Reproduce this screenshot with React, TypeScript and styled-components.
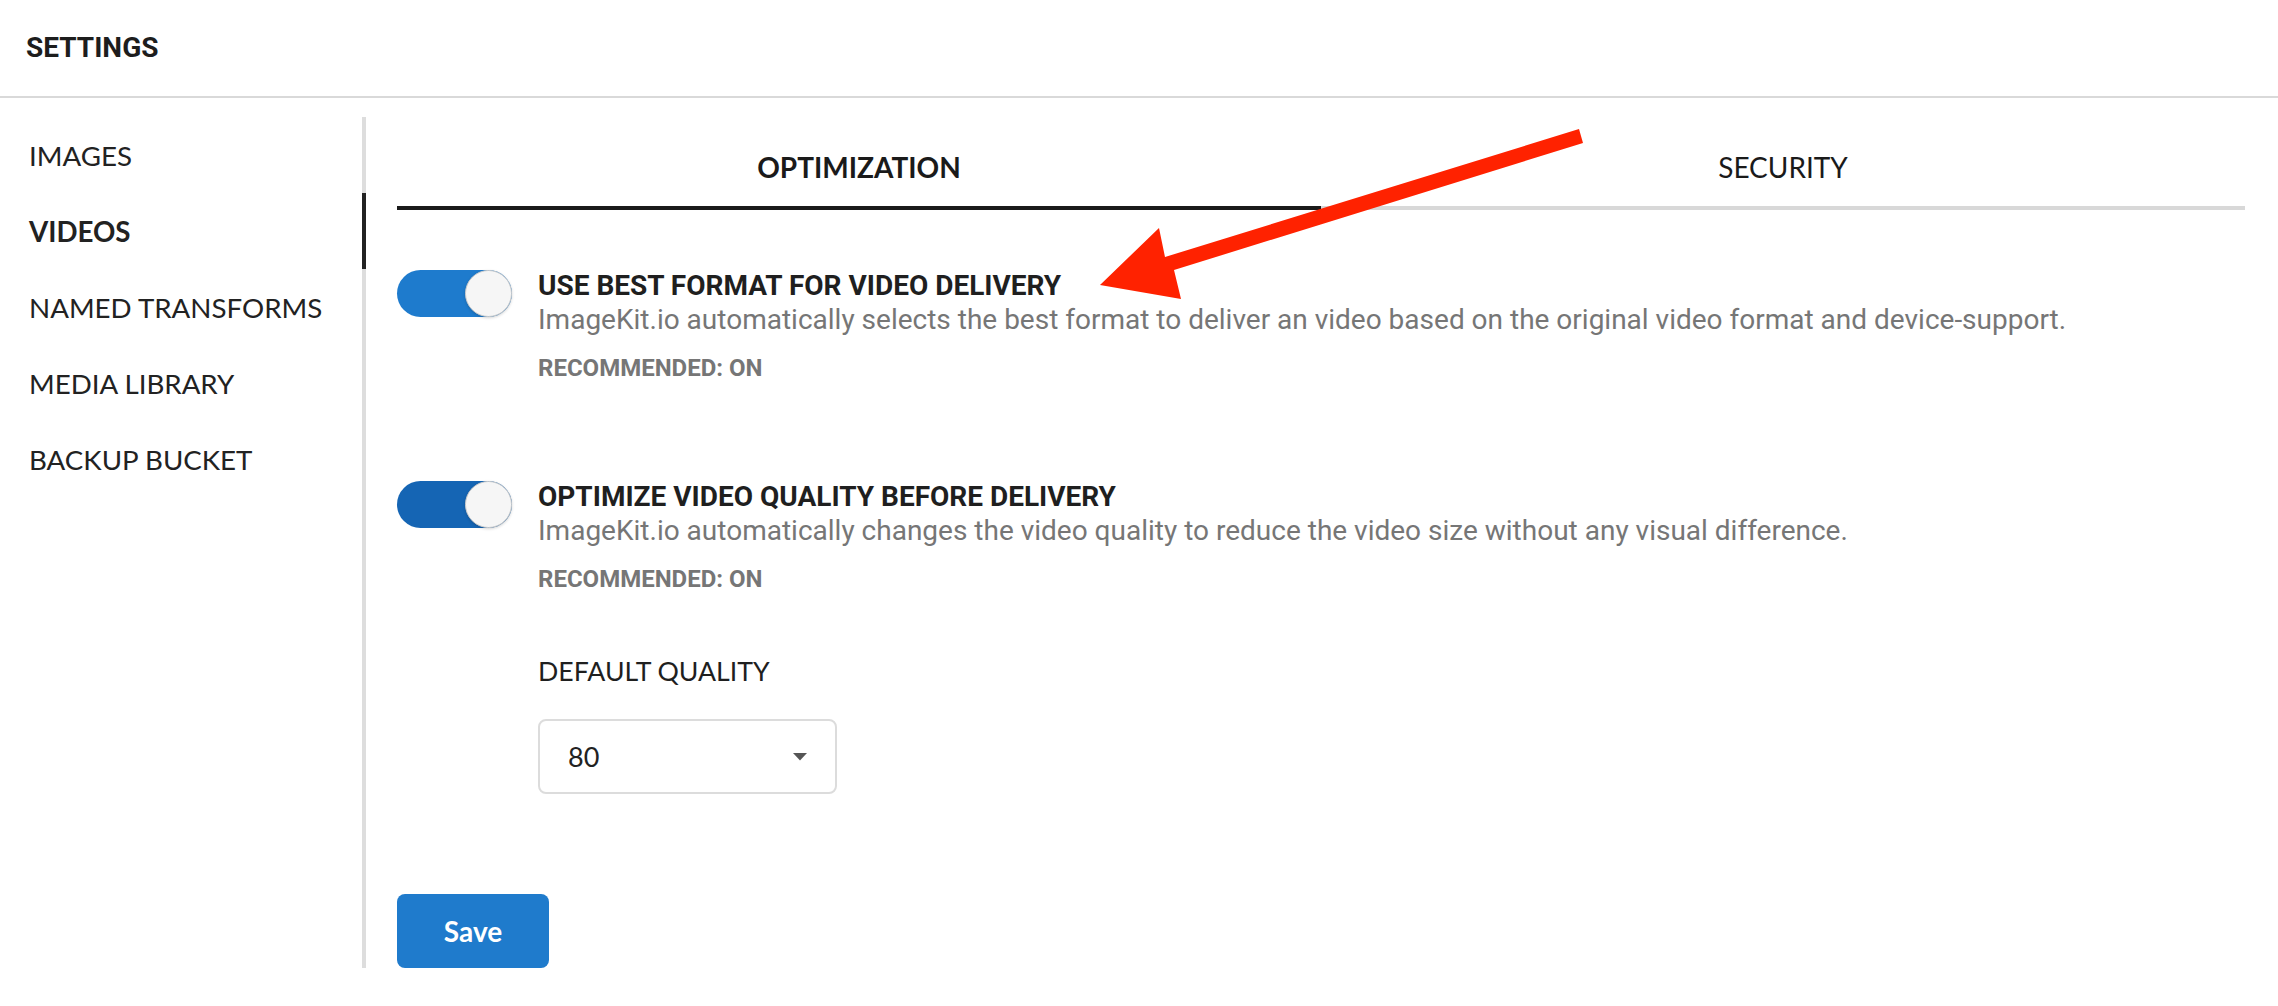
import React from "react";
import styled, { createGlobalStyle } from "styled-components";

const GlobalStyle = createGlobalStyle`
  html, body { margin: 0; padding: 0; background: #ffffff; }
  * { box-sizing: border-box; }
`;

const Page = styled.div`
  position: relative;
  width: 100%;
  min-height: 100vh;
  background: #fff;
`;

const Header = styled.header`
  height: 98px;
  display: flex;
  align-items: center;
  padding: 0 0 2px 26px;
  border-bottom: 2px solid #d9d9d9;
`;

const HeaderTitle = styled.h1`
  margin: 0;
  font-family: Roboto, "Liberation Sans", sans-serif;
  font-weight: 700;
  font-size: 28px;
  color: #1d1d1d;
`;

const Body = styled.div`
  display: flex;
  padding-top: 19px;
  padding-bottom: 36px;
`;

const Sidebar = styled.nav`
  width: 366px;
  flex-shrink: 0;
  border-right: 4px solid #dddddd;
  display: flex;
  flex-direction: column;
`;

const NavItem = styled.div<{ $active?: boolean }>`
  height: 76px;
  display: flex;
  align-items: center;
  padding-left: 29px;
  margin-right: -4px;
  border-right: 4px solid ${(p) => (p.$active ? "#222222" : "transparent")};
  font-family: Lato, "Liberation Sans", sans-serif;
  font-size: 27.7px;
  font-weight: ${(p) => (p.$active ? 700 : 400)};
  color: #222;
`;

const Main = styled.main`
  flex: 1;
  padding: 0 33px 0 31px;
  display: flex;
  flex-direction: column;
  align-items: flex-start;
`;

const Tabs = styled.div`
  width: 100%;
  display: grid;
  grid-template-columns: 1fr 1fr;
`;

const Tab = styled.div<{ $active?: boolean }>`
  height: 93px;
  padding-top: 10px;
  display: flex;
  align-items: center;
  justify-content: center;
  border-bottom: 4px solid ${(p) => (p.$active ? "#1a1a1a" : "#d8d8d8")};
  font-family: Lato, "Liberation Sans", sans-serif;
  font-size: 28px;
  font-weight: ${(p) => (p.$active ? 700 : 400)};
  color: #1a1a1a;
`;

const SettingsList = styled.div`
  padding-top: 60px;
  display: flex;
  flex-direction: column;
`;

const SettingRow = styled.div<{ $spaced?: boolean }>`
  display: flex;
  align-items: flex-start;
  gap: 26px;
  margin-top: ${(p) => (p.$spaced ? "100px" : "0")};
`;

const Toggle = styled.div<{ $color: string }>`
  width: 115px;
  height: 47px;
  flex-shrink: 0;
  border-radius: 24px;
  background: ${(p) => p.$color};
  display: flex;
  justify-content: flex-end;
`;

const Knob = styled.div`
  width: 47px;
  height: 47px;
  border-radius: 50%;
  background: #f6f6f6;
  border: 1.5px solid #cdcdcd;
  box-shadow: 0 1px 3px rgba(0, 0, 0, 0.18);
`;

const TextColumn = styled.div`
  display: flex;
  flex-direction: column;
  align-items: flex-start;
`;

const SettingTitle = styled.div`
  margin-top: 2px;
  font-family: Roboto, "Liberation Sans", sans-serif;
  font-weight: 700;
  font-size: 28px;
  line-height: 28px;
  color: #1f1f1f;
`;

const SettingDesc = styled.div`
  margin-top: 4px;
  font-family: Roboto, "Liberation Sans", sans-serif;
  font-weight: 400;
  font-size: 28px;
  line-height: 32px;
  color: #767676;
`;

const Recommended = styled.div`
  margin-top: 20px;
  font-family: Roboto, "Liberation Sans", sans-serif;
  font-weight: 700;
  font-size: 24px;
  line-height: 25px;
  color: #767676;
`;

const FieldLabel = styled.div`
  margin-top: 63px;
  font-family: Lato, "Liberation Sans", sans-serif;
  font-size: 26.7px;
  line-height: 32px;
  color: #1f1f1f;
`;

const Select = styled.div`
  margin-top: 32px;
  width: 299px;
  height: 75px;
  border: 2px solid #dcdcdc;
  border-radius: 8px;
  display: flex;
  align-items: center;
  justify-content: space-between;
  padding: 0 28px 0 28px;
  font-family: Lato, "Liberation Sans", sans-serif;
  font-size: 27px;
  color: #222;
`;

const SaveButton = styled.button`
  margin-top: 100px;
  width: 152px;
  height: 74px;
  border: none;
  border-radius: 8px;
  background: #1f7bcc;
  color: #fff;
  font-family: Lato, "Liberation Sans", sans-serif;
  font-weight: 700;
  font-size: 28px;
  cursor: pointer;
`;

const Annotation = styled.svg`
  position: absolute;
  left: 0;
  top: 0;
  pointer-events: none;
`;

const Caret = () => (
  <svg width="14" height="8" viewBox="0 0 14 8">
    <path d="M0 0 L14 0 L7 7.5 Z" fill="#555" />
  </svg>
);

export default function App() {
  const nav = ["IMAGES", "VIDEOS", "NAMED TRANSFORMS", "MEDIA LIBRARY", "BACKUP BUCKET"];
  return (
    <Page>
      <GlobalStyle />
      <Header>
        <HeaderTitle>SETTINGS</HeaderTitle>
      </Header>
      <Body>
        <Sidebar>
          {nav.map((n) => (
            <NavItem key={n} $active={n === "VIDEOS"}>
              {n}
            </NavItem>
          ))}
        </Sidebar>
        <Main>
          <Tabs>
            <Tab $active>OPTIMIZATION</Tab>
            <Tab>SECURITY</Tab>
          </Tabs>
          <SettingsList>
            <SettingRow>
              <Toggle $color="#1e7bcd">
                <Knob />
              </Toggle>
              <TextColumn>
                <SettingTitle>USE BEST FORMAT FOR VIDEO DELIVERY</SettingTitle>
                <SettingDesc>
                  ImageKit.io automatically selects the best format to deliver an video based on the original video format and device-support.
                </SettingDesc>
                <Recommended>RECOMMENDED: ON</Recommended>
              </TextColumn>
            </SettingRow>
            <SettingRow $spaced>
              <Toggle $color="#1565b4">
                <Knob />
              </Toggle>
              <TextColumn>
                <SettingTitle>OPTIMIZE VIDEO QUALITY BEFORE DELIVERY</SettingTitle>
                <SettingDesc>
                  ImageKit.io automatically changes the video quality to reduce the video size without any visual difference.
                </SettingDesc>
                <Recommended>RECOMMENDED: ON</Recommended>
                <FieldLabel>DEFAULT QUALITY</FieldLabel>
                <Select>
                  <span>80</span>
                  <Caret />
                </Select>
              </TextColumn>
            </SettingRow>
          </SettingsList>
          <SaveButton>Save</SaveButton>
        </Main>
      </Body>
      <Annotation width="2278" height="1006" viewBox="0 0 2278 1006">
        <polygon
          points="1100,285 1159,228 1165,257 1579,129 1583,143 1174,270 1181,299"
          fill="#ff2200"
        />
      </Annotation>
    </Page>
  );
}
